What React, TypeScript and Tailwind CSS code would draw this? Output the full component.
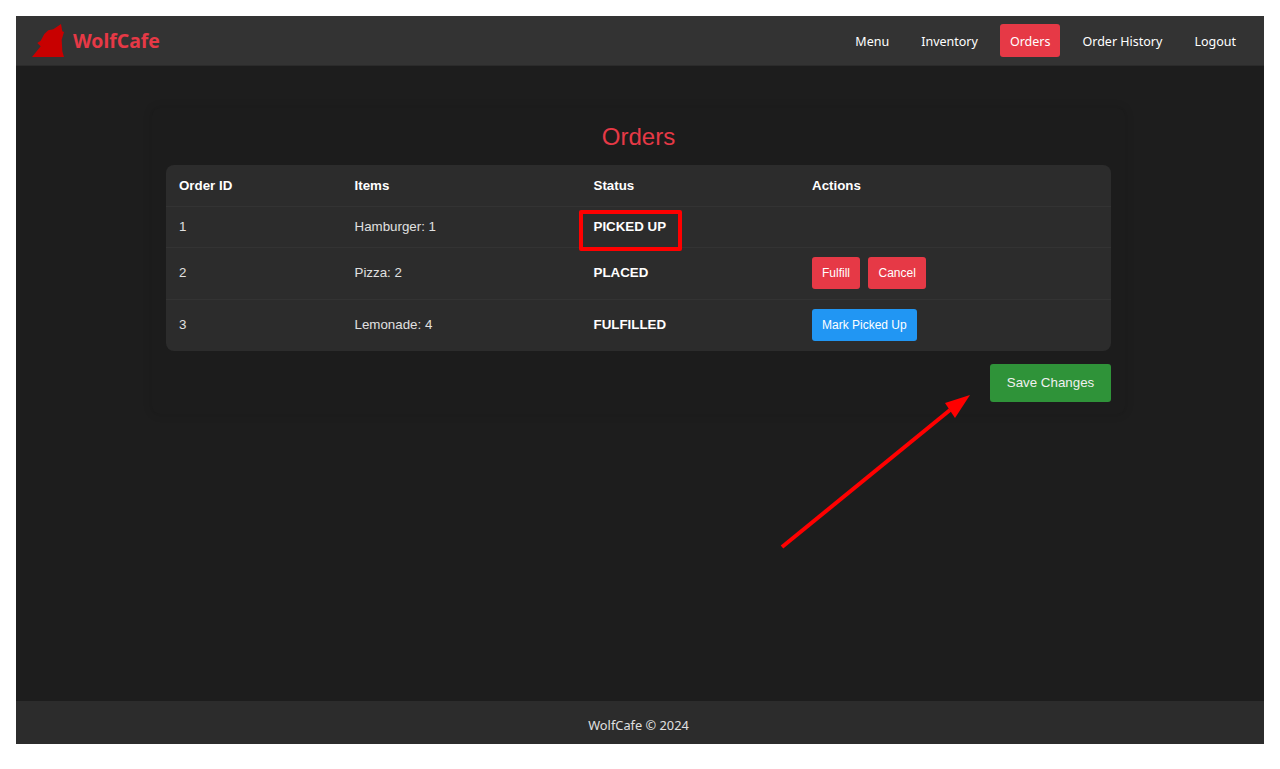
const orders = [
  { id: 1, items: "Hamburger: 1", status: "PICKED UP" },
  { id: 2, items: "Pizza: 2", status: "PLACED" },
  { id: 3, items: "Lemonade: 4", status: "FULFILLED" },
];

function WolfLogo() {
  return (
    <svg width="32" height="34" viewBox="0 0 32 34" className="block">
      <path
        d="M0 33 L8.7 22.3 L5.3 19 L8.7 16.7 L12.3 10 L16.3 6.3 L21.3 5.3 L29 0 L30.3 7.3 L32 8 L29.7 15.7 L30.3 27.3 L32 33 Z"
        fill="#c80000"
      />
    </svg>
  );
}

function NavLink({ label, active }: { label: string; active?: boolean }) {
  return (
    <a
      className={
        active
          ? "h-[33px] px-[10px] pt-[3px] flex items-center rounded-[3px] bg-[#e63946] text-white"
          : "h-[33px] px-[10px] pt-[3px] flex items-center text-white"
      }
    >
      {label}
    </a>
  );
}

function Actions({ id }: { id: number }) {
  if (id === 2) {
    return (
      <div className="flex gap-2">
        <button className="h-[32px] px-[10px] rounded-[3px] bg-[#e63946] text-white text-[12px]">Fulfill</button>
        <button className="h-[32px] px-[10.5px] rounded-[3px] bg-[#e63946] text-white text-[12px]">Cancel</button>
      </div>
    );
  }
  if (id === 3) {
    return (
      <button className="h-[32px] px-[10px] rounded-[3px] bg-[#2196f3] text-white text-[12px]">Mark Picked Up</button>
    );
  }
  return null;
}

export default function App() {
  return (
    <div className="h-[769px] bg-white pt-4 px-4 font-['Liberation_Sans',sans-serif]">
      <div className="relative h-[728px] flex flex-col bg-[#1d1d1d]">
        <nav className="h-[50px] shrink-0 flex items-center justify-between pl-4 pr-[18px] bg-[#333333] border-b border-[#2b2b2b] font-['Noto_Sans',sans-serif] text-[12.5px]">
          <div className="flex items-center gap-[9px]">
            <WolfLogo />
            <span className="text-[#e63946] text-[19.4px] font-bold leading-[30px] pt-px">WolfCafe</span>
          </div>
          <div className="flex items-center gap-[12px]">
            <NavLink label="Menu" />
            <NavLink label="Inventory" />
            <NavLink label="Orders" active />
            <NavLink label="Order History" />
            <NavLink label="Logout" />
          </div>
        </nav>

        <main className="flex-1 pt-[42px]">
          <div className="ml-[136px] w-[973px] h-[306px] rounded-lg bg-[#1c1c1c] px-[14px] pt-[15px] shadow-[0_0_10px_rgba(0,0,0,0.15)]">
            <h1 className="text-center text-[24px] leading-[28px] text-[#e63946]">Orders</h1>
            <div className="mt-[14px] rounded-lg bg-[#2c2c2c] overflow-hidden">
              <table className="w-[945px] table-fixed text-left text-[13.33px] text-white">
                <colgroup>
                  <col className="w-[175.5px]" />
                  <col className="w-[239px]" />
                  <col className="w-[218.5px]" />
                  <col />
                </colgroup>
                <thead>
                  <tr className="h-[41px] border-b border-[#333333]">
                    <th className="px-[13px] pt-px font-bold">Order ID</th>
                    <th className="px-[13px] pt-px font-bold">Items</th>
                    <th className="px-[13px] pt-px font-bold">Status</th>
                    <th className="px-[13px] pt-px font-bold">Actions</th>
                  </tr>
                </thead>
                <tbody>
                  {orders.map((o) => (
                    <tr
                      key={o.id}
                      className={
                        o.id === 1
                          ? "h-[41px] border-b border-[#333333]"
                          : o.id === 2
                            ? "h-[52px] border-b border-[#333333]"
                            : "h-[52px]"
                      }
                    >
                      <td className="px-[13px] text-[#e0e0e0]">{o.id}</td>
                      <td className="px-[13px] text-[#e0e0e0]">{o.items}</td>
                      <td className="px-[13px] font-bold">{o.status}</td>
                      <td className="px-[13px]">
                        <Actions id={o.id} />
                      </td>
                    </tr>
                  ))}
                </tbody>
              </table>
            </div>
            <div className="mt-[13px] flex justify-end">
              <button className="h-[38px] w-[121px] rounded-[3px] bg-[#2f9339] text-[#f0f0f0] text-[13.33px]">
                Save Changes
              </button>
            </div>
          </div>
        </main>

        <footer className="h-[43px] shrink-0 flex items-center justify-center pt-[6px] pr-[3px] bg-[#2c2c2c] text-[#e0e0e0] font-['Noto_Sans',sans-serif] text-[12.8px]">
          WolfCafe © 2024
        </footer>

        {/* annotations drawn over the screenshot */}
        <div className="absolute left-[563px] top-[194px] w-[103px] h-[41px] border-[4px] border-[#ff0000] rounded-[2px]" />
        <svg className="absolute left-[760px] top-[370px]" width="200" height="170" viewBox="0 0 200 170">
          <line x1="6" y1="161" x2="174" y2="24" stroke="#ff0000" strokeWidth="4" />
          <path d="M194 9 L169 17 L179 32 Z" fill="#ff0000" />
        </svg>
      </div>
    </div>
  );
}
